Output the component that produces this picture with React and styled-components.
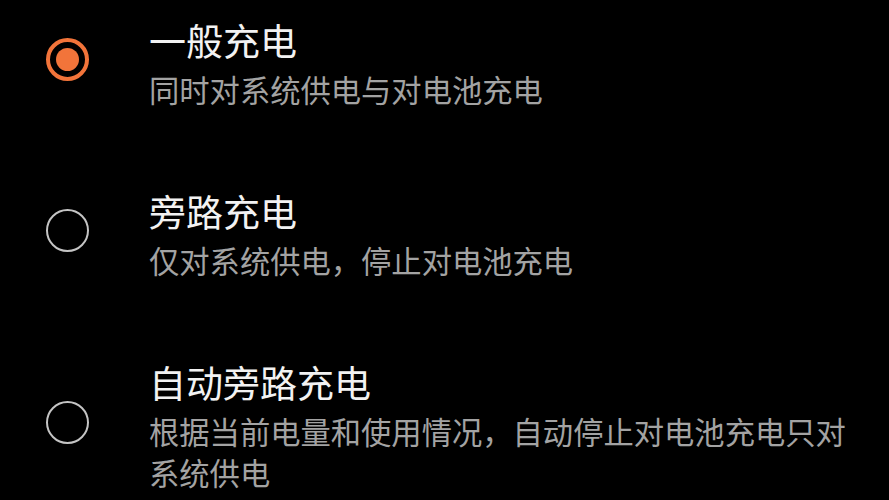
import React, { useState } from 'react';
import styled, { createGlobalStyle } from 'styled-components';

const GlobalStyle = createGlobalStyle`
  html, body {
    margin: 0;
    padding: 0;
    background: #000;
  }
  body {
    font-family: "Noto Sans CJK SC", "Noto Sans", sans-serif;
  }
`;

const List = styled.div`
  display: flex;
  flex-direction: column;
  gap: 76px;
  padding: 15px 30px 0 46px;
  width: 889px;
  height: 500px;
  box-sizing: border-box;
  overflow: hidden;
  background: #000;
`;

const Row = styled.div`
  display: flex;
  align-items: center;
  gap: 60px;
  cursor: pointer;
`;

const Radio = styled.div`
  flex: none;
  width: 43px;
  height: 43px;
  box-sizing: border-box;
  border-radius: 50%;
  border: ${(p) => (p.$checked ? '4px solid #f2743a' : '2.5px solid #c4c4c4')};
  display: flex;
  align-items: center;
  justify-content: center;
  margin-bottom: 6px;
`;

const Dot = styled.div`
  width: 23px;
  height: 23px;
  border-radius: 50%;
  background: #f2743a;
`;

const Texts = styled.div`
  display: flex;
  flex-direction: column;
  gap: 4px;
  min-width: 0;
`;

const Title = styled.div`
  font-size: 37px;
  line-height: 50px;
  color: #f2f2f2;
`;

const Desc = styled.div`
  font-size: 30.3px;
  line-height: 41px;
  color: #a3a3a3;
`;

const options = [
  { title: '一般充电', desc: '同时对系统供电与对电池充电' },
  { title: '旁路充电', desc: '仅对系统供电，停止对电池充电' },
  { title: '自动旁路充电', desc: '根据当前电量和使用情况，自动停止对电池充电只对系统供电' },
];

export default function App() {
  const [selected, setSelected] = useState(0);
  return (
    <>
      <GlobalStyle />
      <List>
        {options.map((o, i) => (
          <Row key={o.title} onClick={() => setSelected(i)}>
            <Radio $checked={selected === i}>{selected === i && <Dot />}</Radio>
            <Texts>
              <Title>{o.title}</Title>
              <Desc>{o.desc}</Desc>
            </Texts>
          </Row>
        ))}
      </List>
    </>
  );
}
